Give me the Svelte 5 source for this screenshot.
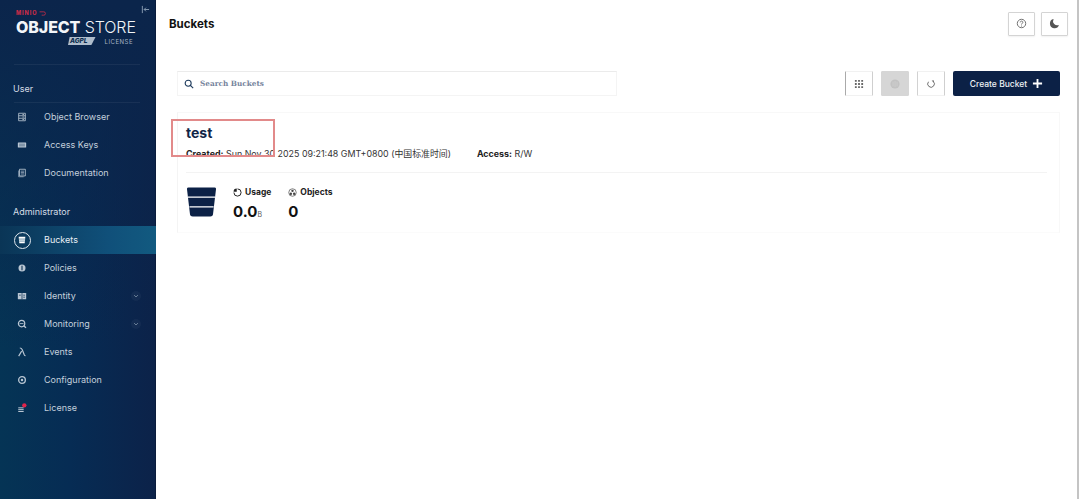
<script>
  const userItems = [
    { label: 'Object Browser', icon: 'browser' },
    { label: 'Access Keys', icon: 'keys' },
    { label: 'Documentation', icon: 'docs' }
  ];
  const adminItems = [
    { label: 'Buckets', icon: 'bucket', active: true },
    { label: 'Policies', icon: 'policy' },
    { label: 'Identity', icon: 'identity', chevron: true },
    { label: 'Monitoring', icon: 'monitor', chevron: true },
    { label: 'Events', icon: 'lambda' },
    { label: 'Configuration', icon: 'config' },
    { label: 'License', icon: 'license' }
  ];
</script>

{#snippet navIcon(name)}
  <svg class="nav-svg" viewBox="0 0 12 12" width="10" height="10" aria-hidden="true">
    {#if name === 'browser'}
      <path d="M2 1.5h8v9H2z M2 4.5h8 M2 7.5h8 M6.5 3h2 M6.5 6h2 M6.5 9h2" fill="none" stroke="currentColor" stroke-width="1"/>
    {:else if name === 'keys'}
      <rect x="1" y="3" width="10" height="6" rx="0.6" fill="currentColor"/>
      <path d="M2.5 5h7 M2.5 7h7" stroke="#0a2f52" stroke-width="0.6"/>
    {:else if name === 'docs'}
      <path d="M3 1.5h7v8H3z" fill="none" stroke="currentColor"/>
      <path d="M2 3v7.5h6" fill="none" stroke="currentColor" stroke-width="0.8"/>
      <path d="M4.5 3.8h4 M4.5 5.5h4 M4.5 7.2h4" stroke="currentColor" stroke-width="0.8"/>
    {:else if name === 'policy'}
      <circle cx="6" cy="6" r="4.2" fill="currentColor"/>
      <path d="M6 3.4v5.2" stroke="#0a2f52" stroke-width="1.3"/>
    {:else if name === 'identity'}
      <rect x="1" y="2.5" width="10" height="7.5" rx="0.6" fill="currentColor"/>
      <path d="M6 2.5v7.5 M7.5 5h2 M7.5 7.4h2 M2.5 5h2" stroke="#0a2f52" stroke-width="0.9"/>
    {:else if name === 'monitor'}
      <circle cx="5.5" cy="5.5" r="3.8" fill="none" stroke="currentColor" stroke-width="1.5"/>
      <path d="M8 8l2.8 2.6" stroke="currentColor" stroke-width="1.6"/>
      <path d="M3.2 5.5h4.6" stroke="currentColor"/>
    {:else if name === 'lambda'}
      <path d="M2 11 5.6 5 M3.4 1.2c1.7 0 2.3.7 2.9 2.1l2.4 6c.3.7.7 1.1 1.5 1.1" fill="none" stroke="currentColor" stroke-width="1.4"/>
    {:else if name === 'config'}
      <circle cx="6" cy="6" r="4" fill="none" stroke="currentColor" stroke-width="1.6"/>
      <circle cx="6" cy="6" r="1.5" fill="currentColor"/>
    {:else if name === 'license'}
      <path d="M1.5 5.8h6.5 M1.5 8h6.5 M1.5 10.2h6.5" stroke="currentColor" stroke-width="1.2"/>
      <circle cx="8.8" cy="2.8" r="2.6" fill="#e0244c"/>
    {/if}
  </svg>
{/snippet}

{#snippet navRow(item)}
  <div class="nav-row" class:active={item.active}>
    <span class="nav-icon">
      {#if item.active}
        <span class="active-ring">
          <svg viewBox="0 0 12 12" width="8" height="8" aria-hidden="true">
            <path d="M1 1h10l-1 10H2z" fill="#fff"/>
            <path d="M1.5 4.6h9 M1.8 7.6h8.4" stroke="#0e4a6f" stroke-width="0.9"/>
          </svg>
        </span>
      {:else}
        {@render navIcon(item.icon)}
      {/if}
    </span>
    <span class="nav-label">{item.label}</span>
    {#if item.chevron}
      <span class="chev">
        <svg viewBox="0 0 8 8" width="6" height="6" aria-hidden="true">
          <path d="M1.5 2.8 4 5.3l2.5-2.5" fill="none" stroke="currentColor" stroke-width="1.1"/>
        </svg>
      </span>
    {/if}
  </div>
{/snippet}

<div class="app">
  <aside class="sidebar">
    <div class="brand">
      <svg class="collapse" viewBox="0 0 10 10" width="9" height="9" aria-hidden="true">
        <path d="M1.5 1v8 M9 5H3.5 M5.5 3 3.5 5l2 2" fill="none" stroke="#8ea3b8" stroke-width="1"/>
      </svg>
      <div class="minio">
        MINIO
        <svg viewBox="0 0 8 6" width="7" height="5" aria-hidden="true"><path d="M.5 1h5a1.6 1.6 0 0 1 0 4H3" fill="none" stroke="#c72c48" stroke-width="1"/></svg>
      </div>
      <div class="product"><b>OBJECT</b> STORE</div>
      <div class="license-line">
        <span class="agpl">AGPL</span>
        <span class="license-word">LICENSE</span>
      </div>
    </div>
    <div class="rule"></div>
    <div class="group-title user-title">User</div>
    <div class="rule"></div>
    <nav class="nav-list">
      {#each userItems as item}{@render navRow(item)}{/each}
    </nav>
    <div class="group-title admin-title">Administrator</div>
    <nav class="nav-list">
      {#each adminItems as item}{@render navRow(item)}{/each}
    </nav>
  </aside>

  <main class="main">
    <header class="top">
      <h1>Buckets</h1>
      <div class="top-actions">
        <button class="tool small" aria-label="Help">
          <svg viewBox="0 0 12 12" width="11" height="11"><circle cx="6" cy="6" r="4.6" fill="none" stroke="#666" stroke-width="1"/><path d="M4.6 4.8c0-1.9 2.9-1.9 2.9-.1 0 1.1-1.5 1.1-1.5 2.4" fill="none" stroke="#666"/><circle cx="6" cy="8.7" r=".6" fill="#666"/></svg>
        </button>
        <button class="tool small" aria-label="Dark mode">
          <svg viewBox="0 0 12 12" width="11" height="11"><path d="M5 1.2a5 5 0 1 0 5.8 6.4A4.6 4.6 0 0 1 5 1.2z" fill="#555"/></svg>
        </button>
      </div>
    </header>

    <section class="toolbar">
      <div class="search">
        <svg viewBox="0 0 12 12" width="10" height="10"><circle cx="5" cy="5" r="3.6" fill="none" stroke="#1d3a5c" stroke-width="1.3"/><path d="M7.7 7.7 11 11" stroke="#1d3a5c" stroke-width="1.4"/></svg>
        <span>Search Buckets</span>
      </div>
      <div class="toolbar-actions">
        <button class="tool first" aria-label="Select multiple">
          <svg viewBox="0 0 11 11" width="10" height="10"><path d="M1 1h2v2H1z M4.5 1h2v2h-2z M8 1h2v2H8z M1 4.5h2v2H1z M4.5 4.5h2v2h-2z M8 4.5h2v2H8z M1 8h2v2H1z M4.5 8h2v2h-2z M8 8h2v2H8z" fill="#666"/></svg>
        </button>
        <button class="tool disabled" aria-label="Manage">
          <svg viewBox="0 0 12 12" width="12" height="12"><circle cx="6" cy="6" r="4.6" fill="#c2c2c2"/><path d="M4 3.5v5 M6 3v6 M8 3.5v5" stroke="#d2d2d2" stroke-width="0.7"/></svg>
        </button>
        <button class="tool" aria-label="Refresh">
          <svg viewBox="0 0 12 12" width="10" height="10"><path d="M8.8 3A4 4 0 1 1 3 3.3" fill="none" stroke="#555" stroke-width="1"/><path d="M6.8 2.2 9.2 1.4 9.4 4z" fill="#555"/></svg>
        </button>
        <button class="create">
          <span>Create Bucket</span>
          <svg viewBox="0 0 12 12" width="11" height="11"><path d="M6 1v10 M1 6h10" stroke="#fff" stroke-width="2"/></svg>
        </button>
      </div>
    </section>

    <article class="card">
      <div class="name-box"></div>
      <h2>test</h2>
      <div class="meta">
        <span><b>Created:</b> Sun Nov 30 2025 09:21:48 GMT+0800 (中国标准时间)</span>
        <span class="access"><b>Access:</b> R/W</span>
      </div>
      <div class="card-rule"></div>
      <div class="stats">
        <svg class="bucket" viewBox="0 0 30 30" width="29" height="30" aria-hidden="true">
          <path d="M1.5 0h27A1.5 1.5 0 0 1 30 1.7L27 27a3 3 0 0 1-3 3H6a3 3 0 0 1-3-3L0 1.7A1.5 1.5 0 0 1 1.5 0z" fill="#0c2146"/>
          <path d="M1 10h28 M2.5 20h25" stroke="#fff" stroke-width="1.2"/>
        </svg>
        <div class="stat">
          <div class="stat-label">
            <svg viewBox="0 0 12 12" width="9" height="9"><path d="M6 1.2a4.8 4.8 0 1 1-4.8 4.8" fill="none" stroke="#222" stroke-width="1.3"/><path d="M5 .8v4.2H.8A4.2 4.2 0 0 1 5 .8z" fill="#222"/></svg>
            Usage
          </div>
          <div class="stat-value">0.0<small>B</small></div>
        </div>
        <div class="stat">
          <div class="stat-label">
            <svg viewBox="0 0 12 12" width="9" height="9"><circle cx="6" cy="6" r="5" fill="none" stroke="#555"/><circle cx="6" cy="3.8" r="1.6" fill="#444"/><circle cx="3.8" cy="7.6" r="1.6" fill="#444"/><circle cx="8.2" cy="7.6" r="1.6" fill="#444"/></svg>
            Objects
          </div>
          <div class="stat-value">0</div>
        </div>
      </div>
    </article>
  </main>
</div>

<style>
  :global(body) {
    margin: 0;
    background: #fff;
  }
  .app {
    display: flex;
    width: 1079px;
    height: 499px;
    overflow: hidden;
    font-family: Inter, "Noto Sans CJK SC", sans-serif;
    color: #111;
    border-right: 2px solid #c4c4c4;
    box-sizing: border-box;
  }
  .sidebar {
    flex: none;
    width: 156px;
    height: 499px;
    background:
      linear-gradient(180deg, #0b254b 0%, rgba(11, 37, 75, 0) 70%),
      linear-gradient(90deg, #053455 0%, #062c54 45%, #0c2249 100%);
    box-shadow: inset -1px 0 0 #0a1c3c;
    color: #c4d0dc;
    font-size: 9px;
  }
  .brand {
    position: relative;
    height: 64px;
    padding: 10px 0 0 16px;
    box-sizing: border-box;
  }
  .collapse {
    position: absolute;
    top: 5px;
    left: 141px;
  }
  .minio {
    display: flex;
    align-items: center;
    gap: 2px;
    color: #c72c48;
    font-size: 5.5px;
    font-weight: 800;
    line-height: 6px;
    letter-spacing: 0.9px;
  }
  .product {
    margin-top: 1px;
    font-size: 16px;
    line-height: 20px;
    color: #f2f5f8;
    font-weight: 300;
    white-space: nowrap;
    letter-spacing: -0.1px;
  }
  .product b {
    font-weight: 800;
  }
  .license-line {
    display: flex;
    align-items: center;
    gap: 9px;
    margin-left: 52px;
  }
  .agpl {
    background: #aebccb;
    color: #0a2b4d;
    font-size: 6.5px;
    font-weight: 800;
    font-style: italic;
    line-height: 8px;
    padding: 0 8px 0 2px;
    clip-path: polygon(6% 0, 100% 0, 85% 100%, 0 100%);
  }
  .license-word {
    font-size: 6px;
    letter-spacing: 0.5px;
    color: #a5b4c4;
  }
  .rule {
    height: 1px;
    margin: 0 16px 0 14px;
    background: rgba(255, 255, 255, 0.06);
  }
  .group-title {
    font-size: 9px;
    line-height: 12px;
    color: #d5dde6;
    padding-left: 13px;
  }
  .user-title {
    padding-top: 18px;
    padding-bottom: 7px;
  }
  .admin-title {
    padding-top: 19px;
    padding-bottom: 8px;
  }
  .nav-row {
    display: flex;
    align-items: center;
    height: 28px;
    padding-left: 16px;
    box-sizing: border-box;
  }
  .nav-row.active {
    background: linear-gradient(90deg, #0a3556 0%, #10507a 70%, #125a80 100%);
    color: #e8eef4;
  }
  .nav-icon {
    width: 12px;
    height: 12px;
    display: flex;
    align-items: center;
    justify-content: center;
    margin-right: 16px;
    color: #b9c6d3;
  }
  .active-ring {
    flex: none;
    width: 17px;
    height: 17px;
    border-radius: 50%;
    border: 1px solid #dfe7ee;
    display: flex;
    align-items: center;
    justify-content: center;
    box-sizing: border-box;
  }
  .nav-label {
    flex: 1;
    line-height: 12px;
  }
  .chev {
    width: 10px;
    height: 10px;
    margin-right: 15px;
    border-radius: 50%;
    background: rgba(255, 255, 255, 0.04);
    display: flex;
    align-items: center;
    justify-content: center;
    color: #7f94a9;
  }
  .main {
    flex: 1;
    min-width: 0;
    position: relative;
  }
  .top {
    display: flex;
    align-items: center;
    justify-content: space-between;
    height: 47px;
    padding: 0 9px 0 13px;
  }
  h1 {
    margin: 0;
    font-size: 11.5px;
    font-weight: 700;
    color: #111;
  }
  .top-actions {
    display: flex;
    gap: 6px;
  }
  .tool {
    width: 28px;
    height: 25px;
    padding: 0;
    background: #fff;
    border: 1px solid #f1f1f1;
    border-left-color: #d2d2d2;
    border-right-color: #cfcfcf;
    border-radius: 1px;
    display: flex;
    align-items: center;
    justify-content: center;
    box-sizing: border-box;
  }
  .tool.first {
    border-left-color: #aaa;
  }
  .tool.small {
    width: 27px;
    height: 24px;
    border-color: #d4d4d4;
    box-shadow: 0 1px 2px rgba(0, 0, 0, 0.06);
  }
  .tool.disabled {
    background: #d6d6d6;
    border-color: #d6d6d6;
  }
  .toolbar {
    display: flex;
    justify-content: space-between;
    align-items: center;
    margin-top: 24px;
    padding: 0 17px 0 21px;
  }
  .search {
    width: 440px;
    height: 25px;
    display: flex;
    align-items: center;
    gap: 6px;
    padding-left: 6px;
    box-sizing: border-box;
    border: 1px solid #f4f4f4;
    border-top-color: #ebebeb;
    font-family: "DejaVu Serif", serif;
    font-size: 7.3px;
    font-weight: 700;
    color: #76849c;
  }
  .toolbar-actions {
    display: flex;
    gap: 8px;
  }
  .create {
    width: 107px;
    height: 25px;
    background: #0c2146;
    color: #eef1f5;
    border: 0;
    border-radius: 2px;
    font: 500 8.5px Inter, sans-serif;
    display: flex;
    align-items: center;
    justify-content: center;
    gap: 5px;
  }
  .card {
    position: relative;
    margin: 16px 17px 0 21px;
    height: 121px;
    padding: 12px 12px 0 8px;
    box-sizing: border-box;
    border: 1px solid #f8f8f8;
    border-left-color: #f4f4f4;
    border-bottom-color: #fbfbfb;
  }
  .name-box {
    position: absolute;
    left: -7px;
    top: 6px;
    width: 104px;
    height: 38px;
    border: 2px solid #e28a8a;
    box-sizing: border-box;
  }
  h2 {
    margin: 0;
    font-size: 14px;
    line-height: 16px;
    font-weight: 700;
    color: #0f2547;
  }
  .meta {
    margin-top: 7px;
    display: flex;
    font-size: 8.9px;
    line-height: 12px;
    color: #333;
    white-space: nowrap;
  }
  .meta b {
    color: #222;
    font-weight: 700;
  }
  .access {
    margin-left: 26px;
  }
  .card-rule {
    height: 1px;
    background: #f3f3f3;
    margin-top: 12px;
  }
  .stats {
    display: flex;
    gap: 17px;
    padding: 14px 0 0 1px;
  }
  .stat {
    margin-top: -1px;
  }
  .stat-label {
    display: flex;
    align-items: center;
    gap: 3px;
    font-size: 8.5px;
    line-height: 12px;
    font-weight: 700;
    color: #222;
  }
  .stat-value {
    font-size: 15px;
    line-height: 20px;
    margin-top: 4px;
    font-weight: 700;
    color: #111;
  }
  .stat-value small {
    font-size: 7px;
    font-weight: 400;
    color: #555;
  }
</style>
